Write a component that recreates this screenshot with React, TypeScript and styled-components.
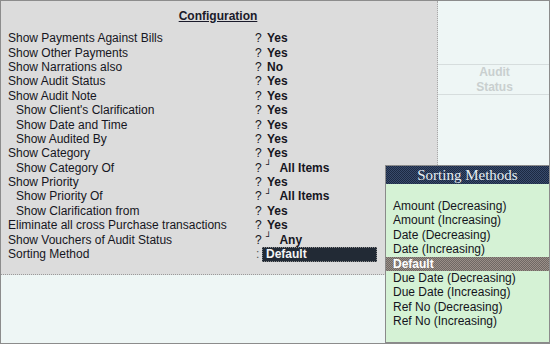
import React from 'react';
import styled, { createGlobalStyle } from 'styled-components';

const GlobalStyle = createGlobalStyle`
  html, body { margin: 0; padding: 0; }
  body { font-family: 'Liberation Sans', Arial, sans-serif; }
`;

type Row = { label: string; indent?: boolean; value: string; sub?: boolean };

const ROWS: Row[] = [
  { label: 'Show Payments Against Bills', value: 'Yes' },
  { label: 'Show Other Payments', value: 'Yes' },
  { label: 'Show Narrations also', value: 'No' },
  { label: 'Show Audit Status', value: 'Yes' },
  { label: 'Show Audit Note', value: 'Yes' },
  { label: "Show Client's Clarification", indent: true, value: 'Yes' },
  { label: 'Show Date and Time', indent: true, value: 'Yes' },
  { label: 'Show Audited By', indent: true, value: 'Yes' },
  { label: 'Show Category', value: 'Yes' },
  { label: 'Show Category Of', indent: true, value: 'All Items', sub: true },
  { label: 'Show Priority', value: 'Yes' },
  { label: 'Show Priority Of', indent: true, value: 'All Items', sub: true },
  { label: 'Show Clarification from', indent: true, value: 'Yes' },
  { label: 'Eliminate all cross Purchase transactions', value: 'Yes' },
  { label: 'Show Vouchers of Audit Status', value: 'Any', sub: true },
];

const METHODS = [
  'Amount (Decreasing)',
  'Amount (Increasing)',
  'Date (Decreasing)',
  'Date (Increasing)',
  'Default',
  'Due Date (Decreasing)',
  'Due Date (Increasing)',
  'Ref No (Decreasing)',
  'Ref No (Increasing)',
];

const App = () => {
  return (
    <>
      <GlobalStyle />
      <Screen>
        <Top>
          <ConfigPanel>
            <Title>Configuration</Title>
            <Rows>
              {ROWS.map((r) => (
                <FieldRow key={r.label}>
                  <Label $indent={r.indent}>{r.label}</Label>
                  <Mark>?</Mark>
                  <Value>
                    {r.sub && <Corner>┘</Corner>}
                    {r.value}
                  </Value>
                </FieldRow>
              ))}
              <FieldRow>
                <Label>Sorting Method</Label>
                <Colon>:</Colon>
                <SelectBox>Default</SelectBox>
              </FieldRow>
            </Rows>
          </ConfigPanel>
          <SideColumn>
            <SideHeader>
              Audit
              <br />
              Status
            </SideHeader>
          </SideColumn>
        </Top>
        <Popup>
          <PopupTitle>Sorting Methods</PopupTitle>
          <PopupList>
            {METHODS.map((m) => (
              <PopupItem key={m} $active={m === 'Default'}>
                {m}
              </PopupItem>
            ))}
          </PopupList>
        </Popup>
      </Screen>
    </>
  );
};

export default App;

const Screen = styled.div`
  position: relative;
  width: 550px;
  height: 344px;
  box-sizing: border-box;
  border: 1px solid #8c8c8c;
  background: #eef6f5;
  overflow: hidden;
`;

const Top = styled.div`
  display: flex;
  height: 274px;
`;

const ConfigPanel = styled.div`
  width: 437px;
  box-sizing: border-box;
  background: #dcdcdc;
  border-right: 1px dotted #a8a8a8;
  border-bottom: 1px dotted #9a9a9a;
  padding: 8px 0 0 7px;
`;

const Title = styled.div`
  width: 420px;
  text-align: center;
  font-size: 12px;
  font-weight: bold;
  line-height: 15px;
  color: #1a1a2a;
  text-decoration: underline;
`;

const Rows = styled.div`
  margin-top: 7px;
`;

const FieldRow = styled.div`
  display: grid;
  grid-template-columns: 247px 11px auto;
  align-items: center;
  height: 14.4px;
  font-size: 12px;
  line-height: 14px;
  color: #161622;
`;

const Label = styled.div<{ $indent?: boolean }>`
  padding-left: ${(p) => (p.$indent ? '8px' : '0')};
  white-space: nowrap;
`;

const Mark = styled.div``;

const Colon = styled.div`
  padding-left: 1px;
  color: #555;
`;

const Value = styled.div`
  display: flex;
  align-items: center;
  height: 14px;
  font-weight: bold;
  white-space: nowrap;
  padding-left: 1px;
`;

const Corner = styled.span`
  position: relative;
  top: -2px;
  font-weight: normal;
  font-size: 9px;
  line-height: 9px;
  margin-left: -1px;
  margin-right: 8px;
  font-family: 'DejaVu Sans', sans-serif;
`;

const SelectBox = styled.div`
  width: 115px;
  height: 15px;
  margin-left: -4px;
  box-sizing: border-box;
  background: #222a35;
  border: 1px dotted #8d8d8d;
  color: #f4f4f4;
  font-weight: bold;
  font-size: 12px;
  line-height: 13px;
  padding-left: 3px;
`;

const SideColumn = styled.div`
  flex: 1;
  padding-top: 63px;
`;

const SideHeader = styled.div`
  height: 29px;
  border-top: 1px solid #d6dddd;
  border-bottom: 1px solid #d6dddd;
  text-align: center;
  font-size: 12px;
  font-weight: bold;
  line-height: 15px;
  color: #c9cfcf;
  padding-left: 2px;
`;

const Popup = styled.div`
  position: absolute;
  left: 384px;
  top: 164px;
  width: 170px;
  height: 178px;
  box-sizing: border-box;
  border: 1px solid #8a8a8a;
  background: #d5f2d5;
`;

const PopupTitle = styled.div`
  height: 18px;
  background: repeating-conic-gradient(#384b6c 0 25%, #1c2942 0 50%) 0 0 / 2px 2px;
  color: #e6eef2;
  font-family: 'Liberation Serif', 'Times New Roman', serif;
  font-size: 15px;
  line-height: 18px;
  text-align: center;
  padding-right: 5px;
`;

const PopupList = styled.div`
  padding-top: 15px;
`;

const PopupItem = styled.div<{ $active?: boolean }>`
  height: 14.4px;
  line-height: 14.4px;
  font-size: 12px;
  padding-left: 7px;
  color: ${(p) => (p.$active ? '#ffffff' : '#141420')};
  font-weight: ${(p) => (p.$active ? 'bold' : 'normal')};
  background: ${(p) =>
    p.$active ? 'repeating-conic-gradient(#9a8f88 0 25%, #6f6864 0 50%) 0 0 / 2px 2px' : 'transparent'};
`;
